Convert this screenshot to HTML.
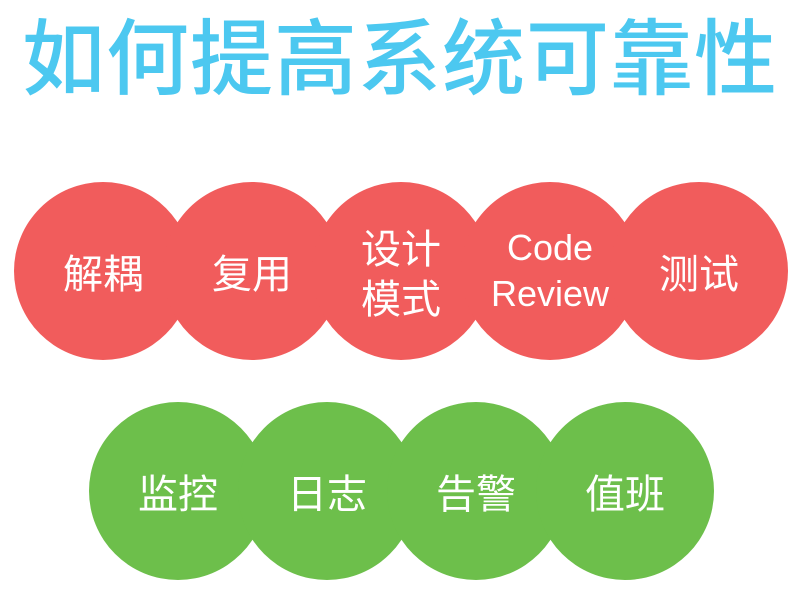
<!DOCTYPE html>
<html><head><meta charset="utf-8"><style>
body{margin:0;width:800px;height:600px;background:#fff;position:relative;overflow:hidden;font-family:"Liberation Sans","Noto Sans CJK SC",sans-serif}
h1{position:absolute;left:0;top:0;width:800px;margin:0;text-align:center;font-size:83px;line-height:104px;color:#4cc8f0;font-weight:500;letter-spacing:1px;font-family:"Noto Sans CJK SC",sans-serif}
.c{position:absolute;width:178px;height:178px;border-radius:50%;display:flex;align-items:center;justify-content:center;text-align:center;color:#fff;font-size:40px;line-height:50px;font-family:"Noto Sans CJK SC",sans-serif}
.r{background:#f15c5c;top:182px}
.g{background:#6dbf4b;top:402px}
.en{font-family:"Liberation Sans",sans-serif;font-size:36px;line-height:46px}
</style></head><body>
<h1>如何提高系统可靠性</h1>
<div class="c r" style="left:14px">解耦</div>
<div class="c r" style="left:163px">复用</div>
<div class="c r" style="left:312px">设计<br>模式</div>
<div class="c r en" style="left:461px">Code<br>Review</div>
<div class="c r" style="left:610px">测试</div>
<div class="c g" style="left:89px">监控</div>
<div class="c g" style="left:238px">日志</div>
<div class="c g" style="left:387px">告警</div>
<div class="c g" style="left:536px">值班</div>
</body></html>
